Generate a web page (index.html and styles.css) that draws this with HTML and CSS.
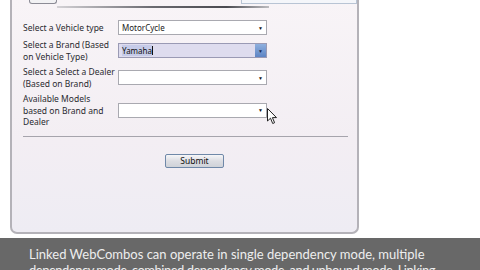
FILE: index.html
```html
<!DOCTYPE html>
<html lang="en">
<head>
    <meta charset="UTF-8">
    <title>Linked WebCombos</title>
    <link rel="stylesheet" href="styles.css">
</head>
<body>
    <div class="stage">
        <section class="panel">
            <div class="topstrip">
                <div class="tab"></div>
                <div class="track">
                    <div class="topbox"></div>
                    <div class="rule-dark"></div>
                </div>
            </div>

            <form class="combo-form">
                <div class="row">
                    <label>Select a Vehicle type</label>
                    <div class="combo"><span class="value">MotorCycle</span><span class="arrow">&#9660;</span></div>
                </div>
                <div class="row">
                    <label>Select a Brand (Based<br>on Vehicle Type)</label>
                    <div class="combo focused"><span class="value"><span class="sel">Yamaha</span><span class="caret"></span></span><span class="arrow">&#9660;</span></div>
                </div>
                <div class="row">
                    <label>Select a Select a Dealer<br>(Based on Brand)</label>
                    <div class="combo"><span class="value"></span><span class="arrow">&#9660;</span></div>
                </div>
                <div class="row">
                    <label>Available Models<br>based on Brand and<br>Dealer</label>
                    <div class="combo has-cursor"><span class="value"></span><span class="arrow">&#9660;</span>
                        <svg class="cursor" width="11" height="17" viewBox="0 0 11 17">
                            <path d="M0.5 0.5 L0.5 13 L3.5 10.2 L5.7 15.5 L7.6 14.7 L5.4 9.6 L9.5 9.6 Z" fill="#fff" stroke="#222" stroke-width="1"/>
                        </svg>
                    </div>
                </div>
            </form>

            <hr class="divider">

            <div class="actions">
                <button type="button" class="submit">Submit</button>
            </div>
        </section>
    </div>

    <div class="caption">
        <div class="line">Linked WebCombos can operate in single dependency mode, multiple</div>
        <div class="line tight">dependency mode, combined dependency mode, and unbound mode. Linking</div>
    </div>
</body>
</html>
```

FILE: styles.css
```css
body {
    margin: 0;
    background-color: #ffffff;
    font-family: "Noto Sans", "Open Sans", sans-serif;
    width: 480px;
    height: 270px;
    overflow: hidden;
}
.stage {
    height: 238px;
    padding-left: 10px;
}
.panel {
    width: 349px;
    height: 234px;
    box-sizing: border-box;
    border: 2px solid #b4b2b8;
    border-top: none;
    border-radius: 0 0 7px 7px;
    background: linear-gradient(#f8f4f7, #f3eef3 60%, #eeecf3);
    padding-left: 11px;
}
/* top remains of the toolbar */
.topstrip {
    display: flex;
    height: 20px;
}
.tab {
    margin-left: 6px;
    width: 34px;
    height: 3px;
    border: 1px solid #8c8c96;
    border-top: none;
    border-radius: 0 0 3px 3px;
    background: #f2f2f4;
}
.track {
    flex: 1;
    display: flex;
    flex-direction: column;
}
.topbox {
    margin-left: 184px;
    width: 114px;
    height: 3px;
    border: 1px solid #b8c4d4;
    border-top: none;
    background: #f4f6fa;
}
.rule-dark {
    margin-top: 2px;
    width: 212px;
    height: 2px;
    background: linear-gradient(to right, #d4d2d6, #6a6a70 45%, #4a4a50 80%, #bcbcc0);
}
.combo-form {
    display: grid;
    row-gap: 4px;
}
.row {
    display: grid;
    grid-template-columns: 95px 149px;
    align-items: center;
}
.row label {
    font-size: 8.5px;
    line-height: 11.5px;
    color: #2a2a30;
    white-space: nowrap;
}
.combo {
    position: relative;
    display: flex;
    align-items: center;
    height: 15px;
    box-sizing: border-box;
    border: 1px solid #a9a9b0;
    background: #ffffff;
    font-size: 8px;
    color: #222;
}
.combo .value {
    flex: 1;
    padding-left: 3px;
    display: flex;
    align-items: center;
}
.combo .arrow {
    width: 11px;
    font-size: 5px;
    text-align: center;
    color: #111;
}
.combo.focused {
    background: #dedcee;
    border-color: #9a9ab4;
}
.combo.focused .sel {
    background: #c6cbe8;
    color: #111;
}
.combo.focused .caret {
    width: 1px;
    height: 9px;
    background: #111;
}
.combo.focused .arrow {
    align-self: stretch;
    display: flex;
    align-items: center;
    justify-content: center;
    background: linear-gradient(#8fb0de, #5d84c4);
    color: #1a2a50;
}
.cursor {
    position: absolute;
    left: 148px;
    top: 4px;
}
.divider {
    margin: 8px 0 0 0;
    width: 325px;
    border: none;
    border-top: 1px solid #a6a4ac;
}
.actions {
    padding: 10px 0 0 142px;
}
.submit {
    width: 59px;
    height: 14px;
    padding: 0;
    font-family: "Noto Sans", sans-serif;
    font-size: 8.5px;
    line-height: 12px;
    color: #111;
    border: 1px solid #6f88a8;
    border-radius: 2px;
    background: linear-gradient(#f6f6f8, #dcdde2 50%, #cfd2d8);
}
.caption {
    height: 32px;
    box-sizing: border-box;
    padding: 8px 0 0 29px;
    background-color: #686868;
    color: #eeeeee;
    font-family: Lato, "Noto Sans", sans-serif;
    font-size: 13px;
    line-height: 16px;
    white-space: nowrap;
    overflow: hidden;
}
.caption .tight {
    letter-spacing: -0.5px;
}
```
